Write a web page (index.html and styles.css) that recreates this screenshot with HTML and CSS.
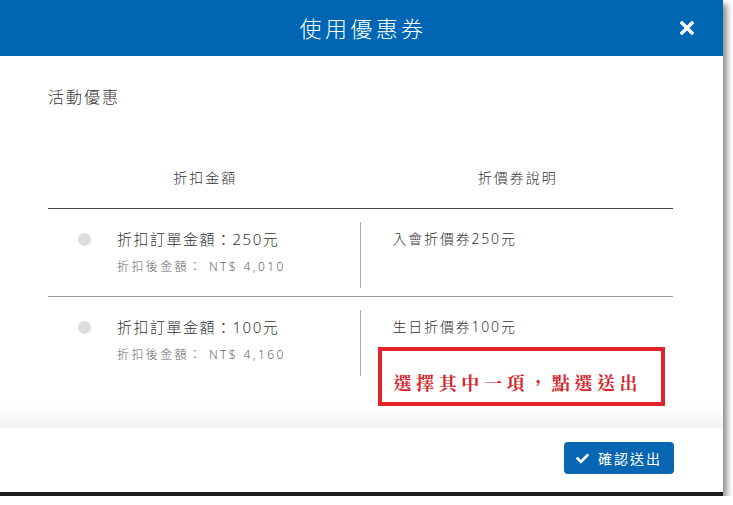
FILE: index.html
```html
<!DOCTYPE html>
<html lang="zh-Hant">
<head>
<meta charset="utf-8">
<title>使用優惠券</title>
<link rel="stylesheet" href="styles.css">
</head>
<body>
<div class="modal">
  <header class="modal-header">
    <h1 class="modal-title">使用優惠券</h1>
    <button class="close" aria-label="close">
      <svg viewBox="0 0 14 14" width="14" height="14"><path d="M2 2 L12 12 M12 2 L2 12" stroke="#fff" stroke-width="3.4" stroke-linecap="square" fill="none"/></svg>
    </button>
  </header>
  <main class="modal-body">
    <div class="section-title">活動優惠</div>
    <div class="coupon-table">
      <div class="thead">
        <div class="th">折扣金額</div>
        <div class="th">折價券說明</div>
      </div>
      <div class="row">
        <div class="cell-left">
          <span class="radio"></span>
          <div class="amount">
            <div class="amount-main">折扣訂單金額：250元</div>
            <div class="amount-sub">折扣後金額： NT$ 4,010</div>
          </div>
        </div>
        <div class="cell-right">
          <div class="desc">入會折價券250元</div>
        </div>
      </div>
      <div class="row row-last">
        <div class="cell-left">
          <span class="radio"></span>
          <div class="amount">
            <div class="amount-main">折扣訂單金額：100元</div>
            <div class="amount-sub">折扣後金額： NT$ 4,160</div>
          </div>
        </div>
        <div class="cell-right">
          <div class="desc">生日折價券100元</div>
          <div class="notice">選擇其中一項，點選送出</div>
        </div>
      </div>
    </div>
  </main>
  <footer class="modal-footer">
    <button class="btn-submit">
      <svg class="check" viewBox="0 0 512 512" width="13" height="13"><path fill="#fff" d="M173.898 439.404l-166.4-166.4c-9.997-9.997-9.997-26.206 0-36.204l36.203-36.204c9.997-9.998 26.207-9.998 36.204 0L192 312.69 432.095 72.596c9.997-9.997 26.207-9.997 36.204 0l36.203 36.204c9.997 9.997 9.997 26.206 0 36.204l-294.4 294.401c-9.998 9.997-26.207 9.997-36.204-.001z"/></svg>
      <span>確認送出</span>
    </button>
  </footer>
</div>
</body>
</html>
```
FILE: styles.css
```css
html, body {
  margin: 0;
  padding: 0;
  background: #fff;
}
body {
  font-family: "Noto Sans", "Noto Sans CJK TC", sans-serif;
  font-weight: 300;
  color: #333;
}
.modal {
  width: 723px;
  height: 496px;
  box-sizing: border-box;
  background: #fff;
  border-bottom: 4px solid #1c1c1c;
  box-shadow: 4px 4px 6px rgba(0,0,0,0.45);
  display: flex;
  flex-direction: column;
}
.modal-header {
  height: 56px;
  flex: none;
  background: #0066b3;
  display: flex;
  align-items: center;
  justify-content: center;
  position: relative;
}
.modal-title {
  margin: 0;
  font-weight: 300;
  font-size: 22px;
  letter-spacing: 3.4px;
  padding-left: 3px;
  color: #fff;
  line-height: 30px;
}
.close {
  position: absolute;
  right: 29px;
  top: 21px;
  width: 14px;
  height: 14px;
  padding: 0;
  border: 0;
  background: none;
  display: block;
}
.close svg { display: block; }
.modal-body {
  height: 372px;
  flex: none;
  box-sizing: border-box;
  padding: 29px 50px 0 48px;
  background: linear-gradient(to bottom, #fff 0, #fff 350px, #f2f2f2 372px);
}
.section-title {
  font-size: 16px;
  line-height: 24px;
  letter-spacing: 2px;
  color: #333;
}
.thead {
  margin-top: 59px;
  display: grid;
  grid-template-columns: 1fr 1fr;
  padding-bottom: 20px;
  border-bottom: 1px solid #444;
}
.th {
  text-align: center;
  font-size: 14px;
  line-height: 20px;
  letter-spacing: 2px;
  padding-left: 2px;
  color: #333;
}
.row {
  display: grid;
  grid-template-columns: 1fr 1fr;
  padding-top: 13px;
  padding-bottom: 8px;
  border-bottom: 1px solid #9a9a9a;
}
.row-last {
  border-bottom: 0;
  padding-bottom: 0;
}
.cell-left {
  height: 66px;
  border-right: 1px solid #aaa;
  display: flex;
  align-items: flex-start;
  padding-left: 30px;
}
.radio {
  width: 13px;
  height: 13px;
  border-radius: 50%;
  background: #ddd;
  margin-top: 11px;
  margin-right: 26px;
  flex: none;
}
.amount-main {
  padding-top: 6px;
  font-size: 15px;
  line-height: 22px;
  letter-spacing: 1.5px;
  color: #333;
}
.amount-sub {
  margin-top: 7px;
  font-size: 12px;
  line-height: 20px;
  letter-spacing: 2.4px;
  color: #666;
}
.cell-right {
  padding-left: 32px;
}
.desc {
  padding-top: 6px;
  font-size: 14px;
  line-height: 22px;
  letter-spacing: 1.8px;
  color: #333;
}
.notice {
  margin-top: 9px;
  margin-left: -15px;
  width: 287px;
  height: 59px;
  box-sizing: border-box;
  border: 4px solid #e2232b;
  padding: 20px 0 0 12px;
  font-family: "Noto Serif CJK TC", "AR PL UKai TW", "Noto Sans CJK TC", serif;
  font-weight: 700;
  font-size: 18px;
  line-height: 22px;
  letter-spacing: 4.6px;
  color: #d9232b;
  white-space: nowrap;
}
.modal-footer {
  flex: 1;
  display: flex;
  justify-content: flex-end;
  align-items: flex-start;
  padding: 14px 49px 0 0;
}
.btn-submit {
  width: 110px;
  height: 32px;
  box-sizing: border-box;
  border: 0;
  border-radius: 4px;
  background: #0866b2;
  color: #fff;
  display: flex;
  align-items: center;
  padding: 0 0 0 12px;
  gap: 9px;
  font-family: "Noto Sans", "Noto Sans CJK TC", sans-serif;
  font-weight: 400;
  font-size: 14px;
  letter-spacing: 2px;
}
.check { display: block; flex: none; }
```
